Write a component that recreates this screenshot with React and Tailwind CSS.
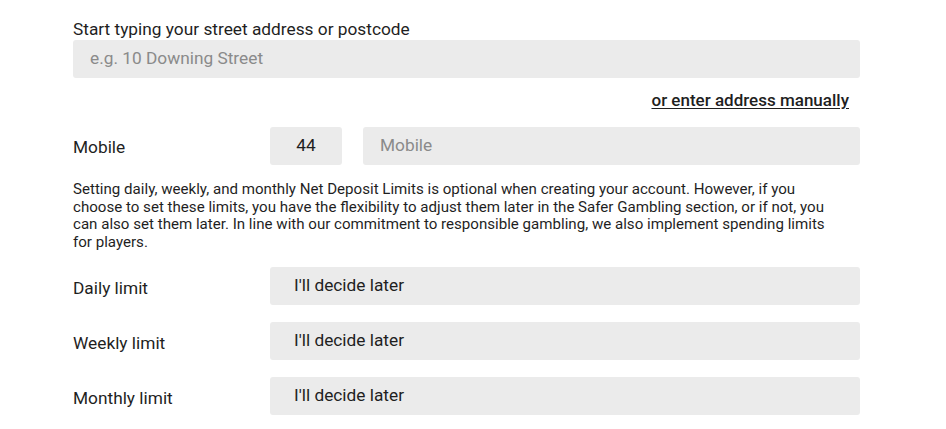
import React from 'react';

const limits = ['Daily limit', 'Weekly limit', 'Monthly limit'];

export default function App() {
    return (
        <div className="min-h-[429px] w-[946px] bg-white text-[#1f1f1f]" style={{ fontFamily: 'Roboto, "Liberation Sans", sans-serif' }}>
            <div className="ml-[73px] w-[787px] pt-[18px]">
                {/* Address lookup */}
                <label className="block text-[17.3px] leading-[22px]">Start typing your street address or postcode</label>
                <div className="flex h-[38px] items-center rounded-[3px] bg-[#ebebeb] pl-[17px] text-[17.3px] text-[#8a8a8a]">
                    e.g. 10 Downing Street
                </div>
                <div className="mt-[12px] flex justify-end pr-[11px]">
                    <a className="text-[17px] leading-[20px] font-medium underline underline-offset-2">or enter address manually</a>
                </div>

                {/* Mobile */}
                <div className="mt-[17px] flex items-center">
                    <span className="w-[197px] text-[17.3px] pt-[3px]">Mobile</span>
                    <div className="flex h-[38px] w-[72px] items-center justify-center rounded-[3px] bg-[#ebebeb] text-[17.3px]">44</div>
                    <div className="ml-[21px] flex h-[38px] flex-1 items-center rounded-[3px] bg-[#ebebeb] pl-[17px] text-[17.3px] text-[#8a8a8a]">Mobile</div>
                </div>

                <p className="mt-[16px] whitespace-nowrap text-[15.1px] leading-[17.5px]">
                    Setting daily, weekly, and monthly Net Deposit Limits is optional when creating your account. However, if you<br />
                    choose to set these limits, you have the flexibility to adjust them later in the Safer Gambling section, or if not, you<br />
                    can also set them later. In line with our commitment to responsible gambling, we also implement spending limits<br />
                    for players.
                </p>

                {/* Limits */}
                <div className="mt-[16px] flex flex-col gap-[17px]">
                    {limits.map((l) => (
                        <div key={l} className="flex items-center">
                            <span className="w-[197px] text-[17.3px] pt-[5px]">{l}</span>
                            <div className="flex h-[38px] flex-1 items-center rounded-[3px] bg-[#ebebeb] pl-[24px] text-[17.3px]">I'll decide later</div>
                        </div>
                    ))}
                </div>
            </div>
        </div>
    );
}
